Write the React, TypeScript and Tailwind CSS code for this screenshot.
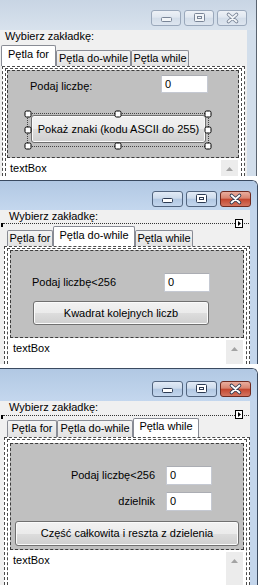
import type { ReactNode } from "react";

function CaptionButtons({ active }: { active: boolean }) {
  const stroke = active ? "#2c3a52" : "#7a8597";
  const fill = active ? "#ffffff" : "#f2f5f8";
  const base = active
    ? "border-[#52657f] bg-[linear-gradient(#e2ebf6_0%,#cddbec_45%,#b1c7e2_50%,#c3d6ed_100%)]"
    : "border-[#9aa8bb] bg-[linear-gradient(#edf1f6_0%,#e0e7f0_45%,#d3dde9_50%,#dde5ef_100%)]";
  const close = active
    ? "border-[#6f2a20] bg-[linear-gradient(#e9ad9e_0%,#d8836f_45%,#c4452d_50%,#d47561_100%)]"
    : base;
  const size = active ? "w-[31px]" : "w-[30px]";
  return (
    <div className="flex gap-[3px]">
      <div className={`h-[16px] rounded-[3px] border ${size} ${base}`}>
        <svg width="29" height="14">
          <rect x="9.5" y="6.5" width="10" height="4" rx="1" fill={fill} stroke={stroke} />
        </svg>
      </div>
      <div className={`h-[16px] rounded-[3px] border ${size} ${base}`}>
        <svg width="29" height="14">
          <rect x="9.5" y="2.5" width="10" height="8" rx="1" fill={fill} stroke={stroke} />
          <rect x="12.5" y="5.5" width="4" height="2" fill="none" stroke={stroke} />
        </svg>
      </div>
      <div className={`h-[16px] rounded-[3px] border ${size} ${close}`}>
        <svg width="29" height="14">
          <path d="M10.5 3.5 L18.5 10.5 M18.5 3.5 L10.5 10.5" stroke={stroke} strokeWidth="3.6" strokeLinecap="round" />
          <path d="M10.5 3.5 L18.5 10.5 M18.5 3.5 L10.5 10.5" stroke={fill} strokeWidth="1.8" strokeLinecap="round" />
        </svg>
      </div>
    </div>
  );
}

function Tab({ selected, className, children }: { selected?: boolean; className: string; children: ReactNode }) {
  return (
    <div
      className={`shrink-0 whitespace-nowrap rounded-t-[2px] border border-b-0 border-[#898c95] text-center ${
        selected ? "bg-white" : "bg-[linear-gradient(#f4f4f4,#e2e2e2)]"
      } ${className}`}
    >
      {children}
    </div>
  );
}

function Page({ outer, inner, children }: { outer: string; inner: string; children: ReactNode }) {
  return (
    <div className={`flex min-h-0 flex-1 flex-col border border-b-0 border-dashed border-[#4a4a4a] bg-white ${outer}`}>
      <div className={`flex min-h-0 flex-1 flex-col border border-b-0 border-dashed border-[#4a4a4a] bg-white ${inner}`}>
        {children}
      </div>
    </div>
  );
}

function NumBox({ className }: { className: string }) {
  return (
    <div className={`shrink-0 border border-[#c5c9d2] border-t-[#abadb3] bg-white pl-[3px] leading-[16px] ${className}`}>
      0
    </div>
  );
}

function WinButton({ className, children }: { className: string; children: ReactNode }) {
  return (
    <div
      className={`flex items-center justify-center whitespace-nowrap rounded-[3px] border border-[#707070] bg-[linear-gradient(#f2f2f2_0%,#ebebeb_50%,#dddddd_51%,#cfcfcf_100%)] shadow-[inset_0_0_0_1px_#fbfbfb] ${className}`}
    >
      {children}
    </div>
  );
}

function MultiBox({ className }: { className: string }) {
  return (
    <div className={`flex shrink-0 bg-white ${className}`}>
      <div className="flex-1 pl-[3px] pt-[4px]">textBox</div>
      <div className="mr-[1px] mt-[2px] w-[17px] bg-[#ececec]">
        <div className="flex h-[17px] items-center justify-center">
          <svg width="7" height="4">
            <path d="M0 4 L3.5 0 L7 4 Z" fill="#a3a3a3" />
          </svg>
        </div>
      </div>
    </div>
  );
}

function Handle({ className }: { className: string }) {
  return (
    <div
      className={`absolute h-[7px] w-[7px] -translate-x-1/2 -translate-y-1/2 rounded-[2px] border border-black bg-white ${className}`}
    />
  );
}

function Selection() {
  return (
    <div className="absolute -bottom-[4px] -left-[4px] -right-[3px] -top-[2px] border border-dotted border-[#444]">
      <Handle className="left-0 top-0" />
      <Handle className="left-1/2 top-0" />
      <Handle className="left-full top-0" />
      <Handle className="left-0 top-1/2" />
      <Handle className="left-full top-1/2" />
      <Handle className="left-0 top-full" />
      <Handle className="left-1/2 top-full" />
      <Handle className="left-full top-full" />
    </div>
  );
}

function DesignMarks({ line, tag }: { line: string; tag: string }) {
  return (
    <>
      <div className={`absolute left-[3px] w-[246px] border-t border-dotted border-[#333] ${line}`} />
      <div className={`absolute left-[1px] h-[4px] w-[2px] bg-black ${line}`} />
      <div className={`absolute left-[235px] flex h-[9px] w-[8px] items-center justify-center border border-black bg-white ${tag}`}>
        <svg width="3" height="5">
          <path d="M0 0 L3 2.5 L0 5 Z" fill="#000" />
        </svg>
      </div>
    </>
  );
}

function ForWindow() {
  return (
    <div className="flex h-[176px] w-[257px] flex-col overflow-hidden border-r border-[#59636f]">
      <div className="flex h-[30px] shrink-0 justify-end bg-[linear-gradient(#c8d5e4,#d8e2ed)] pr-[9px] pt-[10px]">
        <CaptionButtons active={false} />
      </div>
      <div className="flex min-h-0 flex-1">
        <div className="flex w-[247px] flex-col bg-[#f0f0f0]">
          <div className="h-[13px] shrink-0 pl-[5px]">Wybierz zakładkę:</div>
          <div className="mt-[2px] flex h-[21px] shrink-0 items-end pl-[1px]">
            <Tab selected className="h-[21px] w-[55px] pt-[2px]">
              Pętla for
            </Tab>
            <Tab className="h-[16px] w-[75px] pt-[1px]">Pętla do-while</Tab>
            <Tab className="h-[16px] w-[58px] pt-[1px]">Pętla while</Tab>
          </div>
          <Page outer="ml-[2px] w-[243px] px-[2px] pt-[1px]" inner="pl-[1px] pr-[2px] pt-[1px]">
            <div className="h-[88px] shrink-0 border border-dashed border-[#3c3c3c] bg-[#c0c0c0]">
              <div className="mt-[4px] flex items-start">
                <span className="ml-[22px] mt-[5px] w-[131px]">Podaj liczbę:</span>
                <NumBox className="h-[18px] w-[47px]" />
              </div>
              <div className="relative ml-[23px] mt-[22px] w-[175px]">
                <WinButton className="h-[28px] w-[175px]">Pokaż znaki (kodu ASCII do 255)</WinButton>
                <Selection />
              </div>
            </div>
            <MultiBox className="h-[40px]" />
          </Page>
        </div>
        <div className="flex-1 bg-[#d2deeb]" />
      </div>
    </div>
  );
}

function DoWhileWindow() {
  return (
    <div className="mt-[4px] flex h-[184px] w-[258px] flex-col overflow-hidden rounded-tr-[6px] border-r border-t border-[#3a4a60]">
      <div className="flex h-[29px] shrink-0 justify-end bg-[linear-gradient(#b1c8e3,#c4d7ee)] pr-[6px] pt-[10px]">
        <CaptionButtons active />
      </div>
      <div className="flex min-h-0 flex-1">
        <div className="relative flex w-[250px] flex-col bg-[#f0f0f0]">
          <div className="h-[13px] shrink-0 pl-[9px]">Wybierz zakładkę:</div>
          <div className="mt-[3px] flex h-[20px] shrink-0 items-end pl-[7px]">
            <Tab className="h-[16px] w-[46px] pt-[1px]">Pętla for</Tab>
            <Tab selected className="h-[20px] w-[82px] pt-[2px]">
              Pętla do-while
            </Tab>
            <Tab className="h-[16px] w-[58px] pt-[1px]">Pętla while</Tab>
          </div>
          <Page outer="ml-[4px] w-[246px] px-[2px] pt-[1px]" inner="px-[2px] pt-[1px]">
            <div className="h-[88px] shrink-0 border border-dashed border-[#3c3c3c] bg-[#c0c0c0]">
              <div className="mt-[22px] flex items-center">
                <span className="ml-[21px] w-[132px]">Podaj liczbę&lt;256</span>
                <NumBox className="h-[19px] w-[46px]" />
              </div>
              <WinButton className="ml-[22px] mt-[9px] h-[24px] w-[176px]">Kwadrat kolejnych liczb</WinButton>
            </div>
            <MultiBox className="h-[40px]" />
          </Page>
          <DesignMarks line="top-[13px]" tag="top-[9px]" />
        </div>
        <div className="flex-1 bg-[#c4d6ec]" />
      </div>
    </div>
  );
}

function WhileWindow() {
  return (
    <div className="mt-[4px] flex h-[217px] w-[258px] flex-col overflow-hidden rounded-tr-[6px] border-r border-t border-[#3a4a60]">
      <div className="flex h-[32px] shrink-0 justify-end bg-[linear-gradient(#b1c8e3,#c4d7ee)] pr-[6px] pt-[12px]">
        <CaptionButtons active />
      </div>
      <div className="flex min-h-0 flex-1">
        <div className="relative flex w-[250px] flex-col bg-[#f0f0f0]">
          <div className="h-[13px] shrink-0 pl-[9px]">Wybierz zakładkę:</div>
          <div className="mt-[4px] flex h-[19px] shrink-0 items-end pl-[7px]">
            <Tab className="h-[17px] w-[50px] pt-[1px]">Pętla for</Tab>
            <Tab className="h-[17px] w-[76px] pt-[1px]">Pętla do-while</Tab>
            <Tab selected className="h-[19px] w-[66px] pt-[1px]">
              Pętla while
            </Tab>
          </div>
          <Page outer="ml-[4px] w-[246px] px-[2px] pt-[1px]" inner="px-[2px] pt-[3px]">
            <div className="h-[107px] shrink-0 border border-dashed border-[#3c3c3c] bg-[#c0c0c0]">
              <div className="mt-[22px] flex items-center justify-end pr-[31px]">
                <span>Podaj liczbę&lt;256</span>
                <NumBox className="ml-[11px] h-[19px] w-[46px]" />
              </div>
              <div className="mt-[7px] flex items-center justify-end pr-[31px]">
                <span>dzielnik</span>
                <NumBox className="ml-[11px] h-[19px] w-[46px]" />
              </div>
              <WinButton className="ml-[4px] mt-[10px] h-[25px] w-[224px]">Część całkowita i reszta z dzielenia</WinButton>
            </div>
            <MultiBox className="h-[40px]" />
          </Page>
          <DesignMarks line="top-[14px]" tag="top-[9px]" />
        </div>
        <div className="flex-1 bg-[#c4d6ec]" />
      </div>
    </div>
  );
}

export default function App() {
  return (
    <div className="h-[585px] w-[262px] overflow-hidden bg-white font-['Liberation_Sans',Arial,sans-serif] text-[11px] leading-[13px] text-black">
      <ForWindow />
      <DoWhileWindow />
      <WhileWindow />
    </div>
  );
}
